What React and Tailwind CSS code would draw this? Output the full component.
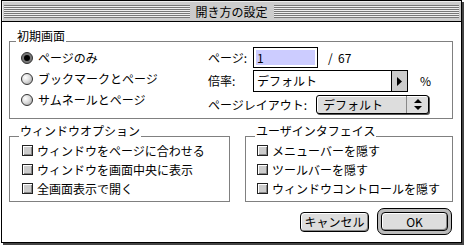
import React from 'react';

const Radio = ({ checked }) => (
    <span className={`w-[12px] h-[12px] rounded-full border border-[#333] flex items-center justify-center ${checked ? 'bg-[#777]' : 'bg-[radial-gradient(circle_at_35%_35%,#fff,#ddd_45%,#999)]'}`}>
        {checked && <span className="w-[6px] h-[6px] rounded-full bg-black" />}
    </span>
);

const Check = () => (
    <span className="w-[11px] h-[11px] border border-[#222] bg-[#ccc] shadow-[inset_1px_1px_0_#fff,inset_-1px_-1px_0_#888]" />
);

const Group = ({ label, lead, className, children }) => (
    <div className={className}>
        <div className="flex items-end">
            <div className={`${lead} border-b border-[#808080]`} />
            <span className="px-[1px] text-[12px] leading-[12px]">{label}</span>
            <div className="flex-1 border-b border-[#808080]" />
        </div>
        <div className="border-x border-b border-[#808080]">{children}</div>
    </div>
);

const Stripes = () => (
    <div className="flex-1 h-[13px] bg-[repeating-linear-gradient(to_bottom,#777_0,#777_1px,#eee_1px,#eee_2px)]" />
);

const App = () => {
    const views = ['ページのみ', 'ブックマークとページ', 'サムネールとページ'];
    const windowOpts = ['ウィンドウをページに合わせる', 'ウィンドウを画面中央に表示', '全画面表示で開く'];
    const uiOpts = ['メニューバーを隠す', 'ツールバーを隠す', 'ウィンドウコントロールを隠す'];

    return (
        <div className="w-[465px] h-[246px] bg-white text-black text-[12px] font-['Noto_Sans_CJK_JP',sans-serif]">
            <div className="ml-px w-[461px] h-[243px] border border-black shadow-[2px_2px_0_#444] flex flex-col">
                <div className="h-[21px] bg-[#ccc] border-b border-black flex items-center px-[2px] gap-[4px] shadow-[inset_1px_1px_0_#eee]">
                    <Stripes />
                    <span className="px-[2px] leading-[13px]">開き方の設定</span>
                    <Stripes />
                </div>

                <div className="pl-[7px] pr-[8px] pt-[8px]">
                    <Group label="初期画面" lead="w-[7px]">
                        <div className="flex pt-[5px] pb-[4px]">
                            <div className="w-[198px] pl-[11px]">
                                {views.map((v, i) => (
                                    <div key={v} className="h-[21px] flex items-center gap-[5px]">
                                        <Radio checked={i === 0} />
                                        <span className="leading-[12px]">{v}</span>
                                    </div>
                                ))}
                            </div>
                            <div className="flex flex-col">
                                <div className="h-[21px] flex items-center">
                                    <span className="w-[45px]">ページ:</span>
                                    <div className="w-[65px] h-[21px] border border-black p-[2px]">
                                        <div className="h-full bg-[#ccccff] px-[1px] leading-[15px]">1</div>
                                    </div>
                                    <span className="ml-[10px]">/&nbsp; 67</span>
                                </div>
                                <div className="h-[22px] mt-[2px] flex items-center">
                                    <span className="w-[45px]">倍率:</span>
                                    <div className="w-[139px] h-full border border-black pl-[3px] flex items-center">デフォルト</div>
                                    <div className="w-[16px] h-full border border-l-0 border-black bg-[#ccc] flex items-center justify-center">
                                        <svg width="5" height="9" viewBox="0 0 5 9"><path d="M0 0 L5 4.5 L0 9 Z" fill="#000" /></svg>
                                    </div>
                                    <span className="ml-[12px]">%</span>
                                </div>
                                <div className="h-[19px] mt-[3px] flex items-center">
                                    <span className="w-[108px]">ページレイアウト:</span>
                                    <div className="w-[113px] h-full rounded-[3px] border border-black bg-[#ddd] shadow-[1px_1px_0_#555,inset_1px_1px_0_#fff] flex">
                                        <span className="flex-1 pl-[6px] leading-[17px]">デフォルト</span>
                                        <div className="w-[22px] border-l border-[#888] flex items-center justify-center">
                                            <svg width="8" height="11" viewBox="0 0 8 11">
                                                <path d="M4 0 L8 4 L0 4 Z M0 7 L8 7 L4 11 Z" fill="#000" />
                                            </svg>
                                        </div>
                                    </div>
                                </div>
                            </div>
                        </div>
                    </Group>

                    <div className="mt-[6px] flex gap-[15px]">
                        <Group label="ウィンドウオプション" lead="w-[10px]" className="w-[221px]">
                            <div className="pl-[12px] pt-[4px] pb-[3px]">
                                {windowOpts.map(o => (
                                    <div key={o} className="h-[19px] flex items-center gap-[4px]">
                                        <Check />
                                        <span className="leading-[12px]">{o}</span>
                                    </div>
                                ))}
                            </div>
                        </Group>
                        <Group label="ユーザインタフェイス" lead="w-[10px]" className="flex-1">
                            <div className="pl-[11px] pt-[4px] pb-[3px]">
                                {uiOpts.map(o => (
                                    <div key={o} className="h-[19px] flex items-center gap-[4px]">
                                        <Check />
                                        <span className="leading-[12px]">{o}</span>
                                    </div>
                                ))}
                            </div>
                        </Group>
                    </div>

                    <div className="mt-[6px] flex justify-end items-center gap-[8px] pr-[1px]">
                        <button className="w-[69px] h-[20px] rounded-[4px] border border-black bg-[#ddd] shadow-[inset_1px_1px_0_#fff,inset_-1px_-1px_0_#888] leading-[16px]">キャンセル</button>
                        <div className="w-[75px] h-[27px] rounded-[7px] border border-black bg-[#bbb] p-[3px]">
                            <button className="w-full h-full rounded-[4px] border border-black bg-[#ddd] shadow-[inset_1px_1px_0_#fff,inset_-1px_-1px_0_#888] leading-[16px]">OK</button>
                        </div>
                    </div>
                </div>
            </div>
        </div>
    );
};

export default App;
